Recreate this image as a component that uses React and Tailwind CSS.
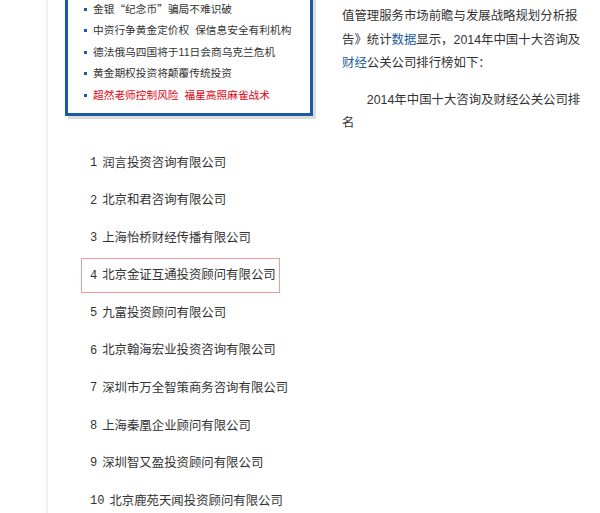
import React from 'react';

const news = [
  { text: <>金银<span className="font-['Noto_Sans_CJK_SC']">“</span>纪念币<span className="font-['Noto_Sans_CJK_SC']">”</span>骗局不难识破</>, key: 'a' },
  { text: '中资行争黄金定价权\u00a0\u00a0保信息安全有利机构', key: 'b' },
  { text: '德法俄乌四国将于11日会商乌克兰危机', key: 'c' },
  { text: '黄金期权投资将颠覆传统投资', key: 'd' },
  { text: '超然老师控制风险\u00a0\u00a0福星高照麻雀战术', key: 'e', hot: true },
];

const companies = [
  '润言投资咨询有限公司',
  '北京和君咨询有限公司',
  '上海怡桥财经传播有限公司',
  '北京金证互通投资顾问有限公司',
  '九富投资顾问有限公司',
  '北京翰海宏业投资咨询有限公司',
  '深圳市万全智策商务咨询有限公司',
  '上海秦凰企业顾问有限公司',
  '深圳智又盈投资顾问有限公司',
  '北京鹿苑天闻投资顾问有限公司',
];

export default function App() {
  return (
    <div
      className="flex min-h-[513px] overflow-hidden bg-white text-[#333]"
      style={{ fontFamily: '"Liberation Sans", "Noto Sans CJK SC", sans-serif' }}
    >
      <div className="w-[46px] shrink-0" />
      <div className="w-[2px] shrink-0 bg-[#f2f2f2]" />

      <div className="flex-1">
        {/* top: news box + article text */}
        <div className="flex items-start">
          <div className="ml-[17px] mt-[-12.75px] w-[248px] shrink-0 border-[3px] border-[#1b5ba3] bg-white pl-[16px] pt-[8px] pb-[7.25px] shadow-[3px_3px_0_#dcdcdc]">
            <ul>
              {news.map(item => (
                <li key={item.key} className="flex h-[21.5px] items-center">
                  <span className="h-[3px] w-[3px] shrink-0 bg-[#1b5ba3]" />
                  <span className={`ml-[6px] whitespace-nowrap text-[10.7px] ${item.hot ? 'text-[#e60012]' : 'text-[#333]'}`}>
                    {item.text}
                  </span>
                </li>
              ))}
            </ul>
          </div>

          <div className="ml-[29px] mt-[5.25px] w-[246px] text-[12.4px] leading-[23.5px]">
            <p>
              值管理服务市场前瞻与发展战略规划分析报告》统计<a className="text-[#1b5ba3]">数据</a>显示，2014年中国十大咨询及<a className="text-[#1b5ba3]">财经</a>公关公司排行榜如下：
            </p>
            <p className="mt-[13px] indent-[2em]">2014年中国十大咨询及财经公关公司排名</p>
          </div>
        </div>

        {/* ranking list */}
        <ol className="mt-[8.5px] pl-[33px]">
          {companies.map((name, i) => (
            <li key={name} className="flex h-[37.55px] items-center">
              <span
                className={`inline-flex h-[35px] items-center pl-[8px] pr-[3px] border ${i === 3 ? 'border-[#f29a9a]' : 'border-transparent'}`}
              >
                <span className="text-[12px]" style={{ fontFamily: '"Liberation Mono", monospace' }}>{i + 1}</span>
                <span className="ml-[5px] text-[12.4px]">{name}</span>
              </span>
            </li>
          ))}
        </ol>
      </div>
    </div>
  );
}
